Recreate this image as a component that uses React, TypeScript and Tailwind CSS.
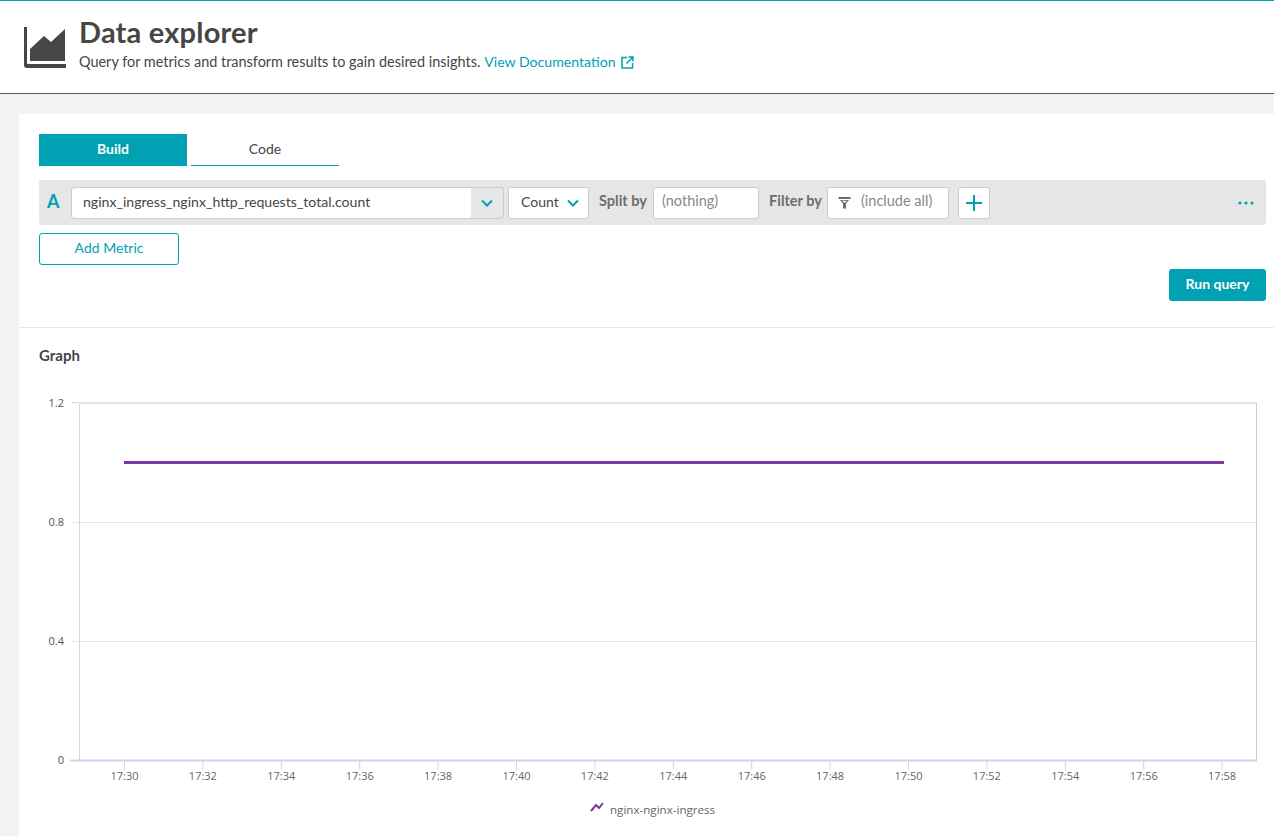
import React from "react";

const TEAL = "#00a1b2";

const yTicks = [
  { label: "1.2", y: 403 },
  { label: "0.8", y: 522 },
  { label: "0.4", y: 641 },
  { label: "0", y: 760 },
];
const xTicks = ["17:30", "17:32", "17:34", "17:36", "17:38", "17:40", "17:42", "17:44", "17:46", "17:48", "17:50", "17:52", "17:54", "17:56", "17:58"];

const Chevron = () => (
  <svg width="14" height="14" viewBox="0 0 14 14" fill="none" stroke={TEAL} strokeWidth="2">
    <path d="M2 4.5 L7 9.5 L12 4.5" />
  </svg>
);

const Chart = () => (
  <svg width="1255" height="430" viewBox="19 390 1255 430" className="block" style={{ fontFamily: "'Open Sans', sans-serif" }}>
    {/* plot frame */}
    <path d="M79.5 403 H1256.5 V760" fill="none" stroke="#cccccc" />
    <path d="M79.5 403 V760" fill="none" stroke="#ccd6eb" />
    <line x1="72" x2="79" y1="402.5" y2="402.5" stroke="#ccd6eb" />
    <line x1="72" x2="1256" y1="522.5" y2="522.5" stroke="#e6e6e6" />
    <line x1="72" x2="1256" y1="641.5" y2="641.5" stroke="#e6e6e6" />
    <line x1="70" x2="1257" y1="760.5" y2="760.5" stroke="#ccd6eb" strokeWidth="2" />
    {yTicks.map((t) => (
      <text key={t.label} x="64" y={t.y + 4} textAnchor="end" fontSize="11" fill="#555555">
        {t.label}
      </text>
    ))}
    {xTicks.map((t, i) => {
      const x = 124.5 + i * 78.4;
      return (
        <g key={t}>
          <line x1={x} x2={x} y1="761" y2="770" stroke="#ccd6eb" />
          <text x={x} y="780" textAnchor="middle" fontSize="11" fill="#666666">
            {t}
          </text>
        </g>
      );
    })}
    <line x1="124" x2="1224" y1="462.5" y2="462.5" stroke="#7c38a1" strokeWidth="3" />
    {/* legend */}
    <path d="M591 811 L596 805 L599 808 L603 803" fill="none" stroke="#7c38a1" strokeWidth="2" />
    <text x="610" y="814" fontSize="11.6" fill="#666666">
      nginx-nginx-ingress
    </text>
  </svg>
);

export default function App() {
  return (
    <div className="h-[836px] overflow-hidden bg-[#f2f2f2] text-[#454646]" style={{ fontFamily: "Lato, sans-serif" }}>
      <header className="flex h-[94px] items-start border-t border-b border-t-[#00a1b2] border-b-[#4d6366] bg-white pl-[24px]">
        <svg width="42" height="42" viewBox="0 0 42 42" className="mt-[26px]" fill="#454646">
          <path d="M0 0 H3 V36 Q3 37 4 37 H42 V41 H3 Q0 41 0 38 Z" />
          <path d="M6 34 V22 L20 9 L27 15 L41 2 V34 Z" />
        </svg>
        <div className="ml-[13px] pt-[15px]">
          <h1 className="text-[29px] leading-[32px] font-bold tracking-[0.2px] text-[#454646]">Data explorer</h1>
          <p className="mt-[4px] flex items-center text-[14.45px] leading-[20px]">
            Query for metrics and transform results to gain desired insights.
            <span className="ml-[4px] text-[14.1px] text-[#00a1b2]">View Documentation</span>
            <svg width="13" height="13" viewBox="0 0 13 13" className="ml-[5px]" fill="none" stroke={TEAL} strokeWidth="1.5">
              <path d="M6 1.5 H1 V12 H11.5 V7" />
              <path d="M5.5 7.5 L11.5 1.5 M7.5 1 H12 V5.5" />
            </svg>
          </p>
        </div>
      </header>

      <main className="mt-[20px] ml-[19px] h-[722px] bg-white">
        <div className="px-[20px] pr-[8px] pt-[20px]">
          <div className="flex h-[32px] gap-[4px] text-[14px]">
            <button className="w-[148px] bg-[#00a1b2] pb-[4px] font-bold text-white">Build</button>
            <button className="w-[148px] border-b border-[#00a1b2] pb-[3px] text-[#454646]">Code</button>
          </div>

          <div className="mt-[14px] flex h-[45px] items-center rounded-[3px] bg-[#e6e6e6] pr-[12px] pl-[8px] text-[14px]">
            <span className="w-[24px] pb-[2px] text-[18px] font-bold text-[#00a1b2]">A</span>
            <div className="flex h-[32px] w-[433px] rounded-[3px] border border-[#cccccc]">
              <div className="flex flex-1 items-center rounded-l-[3px] bg-white pb-[2px] pl-[11px] text-[14.1px]">nginx_ingress_nginx_http_requests_total.count</div>
              <div className="flex w-[32px] items-center justify-center">
                <Chevron />
              </div>
            </div>
            <div className="ml-[4px] flex h-[32px] w-[81px] items-center justify-between rounded-[3px] border border-[#cccccc] bg-white pr-[8px] pl-[12px]">
              <span className="pb-[3px]">Count</span>
              <Chevron />
            </div>
            <span className="ml-[10px] w-[54px] pb-[3px] text-[14.5px] font-bold text-[#6d6d6d]">Split by</span>
            <div className="flex h-[32px] w-[106px] items-center rounded-[3px] border border-[#cccccc] bg-white pb-[3px] pl-[8px] text-[14.5px] text-[#898989]">(nothing)</div>
            <span className="ml-[10px] w-[58px] pb-[3px] text-[14.5px] font-bold text-[#6d6d6d]">Filter by</span>
            <div className="flex h-[32px] w-[122px] items-center rounded-[3px] border border-[#cccccc] bg-white pl-[10px] text-[14.5px] text-[#898989]">
              <svg width="13" height="13" viewBox="0 0 13 13" fill="#6d6d6d" className="mr-[10px]">
                <path d="M0.5 1 H12.5 V3 H0.5 Z M2 4 H11 L8 7.5 V12.5 H5 V7.5 Z M4 4.8 L6.5 7 L9 4.8 Z" fillRule="evenodd" />
              </svg>
              <span className="pb-[3px]">(include all)</span>
            </div>
            <div className="ml-[9px] flex h-[32px] w-[32px] items-center justify-center rounded-[3px] border border-[#cccccc] bg-white">
              <svg width="16" height="16" viewBox="0 0 16 16" stroke={TEAL} strokeWidth="2">
                <path d="M8 0 V16 M0 8 H16" />
              </svg>
            </div>
            <svg width="16" height="4" viewBox="0 0 16 4" fill={TEAL} className="ml-auto">
              <circle cx="2" cy="2" r="1.6" />
              <circle cx="8" cy="2" r="1.6" />
              <circle cx="14" cy="2" r="1.6" />
            </svg>
          </div>

          <button className="mt-[8px] block h-[32px] w-[140px] rounded-[3px] border border-[#00a1b2] pb-[4px] text-[14px] text-[#00a1b2]">Add Metric</button>

          <div className="mt-[4px] flex justify-end">
            <button className="h-[32px] w-[97px] rounded-[3px] bg-[#00a1b2] pb-[4px] text-[14px] font-bold text-white">Run query</button>
          </div>
        </div>

        <div className="mt-[26px] border-t border-[#e6e6e6]" />
        <h2 className="mt-[19px] pl-[20px] text-[15px] leading-[17px] font-bold">Graph</h2>
        <div className="mt-[26px]">
          <Chart />
        </div>
      </main>
    </div>
  );
}
